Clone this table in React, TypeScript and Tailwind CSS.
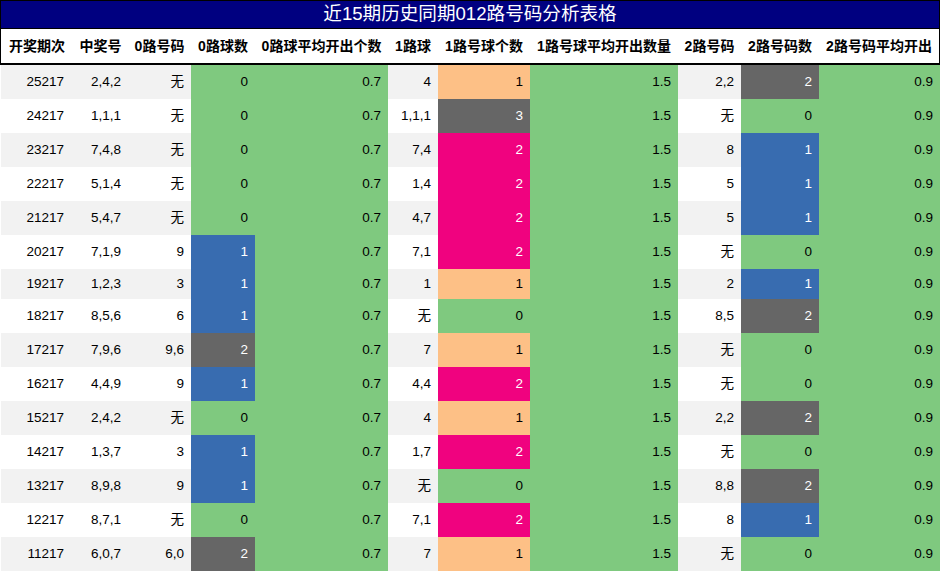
import React from "react";

type Row = [string, string, string, number, string, number, string, number];

const rows: Row[] = [
  ["25217", "2,4,2", "无", 0, "4", 1, "2,2", 2],
  ["24217", "1,1,1", "无", 0, "1,1,1", 3, "无", 0],
  ["23217", "7,4,8", "无", 0, "7,4", 2, "8", 1],
  ["22217", "5,1,4", "无", 0, "1,4", 2, "5", 1],
  ["21217", "5,4,7", "无", 0, "4,7", 2, "5", 1],
  ["20217", "7,1,9", "9", 1, "7,1", 2, "无", 0],
  ["19217", "1,2,3", "3", 1, "1", 1, "2", 1],
  ["18217", "8,5,6", "6", 1, "无", 0, "8,5", 2],
  ["17217", "7,9,6", "9,6", 2, "7", 1, "无", 0],
  ["16217", "4,4,9", "9", 1, "4,4", 2, "无", 0],
  ["15217", "2,4,2", "无", 0, "4", 1, "2,2", 2],
  ["14217", "1,3,7", "3", 1, "1,7", 2, "无", 0],
  ["13217", "8,9,8", "9", 1, "无", 0, "8,8", 2],
  ["12217", "8,7,1", "无", 0, "7,1", 2, "8", 1],
  ["11217", "6,0,7", "6,0", 2, "7", 1, "无", 0],
];

const widths = [
  "w-[72px]",
  "w-[55px]",
  "w-[63px]",
  "w-[64px]",
  "w-[133px]",
  "w-[50px]",
  "w-[92px]",
  "w-[148px]",
  "w-[63px]",
  "w-[78px]",
  "flex-1",
];

const headers = [
  "开奖期次",
  "中奖号",
  "0路号码",
  "0路球数",
  "0路球平均开出个数",
  "1路球",
  "1路号球个数",
  "1路号球平均开出数量",
  "2路号码",
  "2路号码数",
  "2路号码平均开出",
];

const green = "bg-[#7fc97f] text-black";
const blue = "bg-[#386cb0] text-white";
const gray = "bg-[#666666] text-white";
const orange = "bg-[#fdc086] text-black";
const pink = "bg-[#f0027f] text-white";

function zeroTwo(v: number) {
  if (v === 0) return green;
  if (v === 1) return blue;
  return gray;
}
function oneCls(v: number) {
  if (v === 0) return green;
  if (v === 1) return orange;
  if (v === 2) return pink;
  return gray;
}

export default function App() {
  return (
    <div
      className="w-[940px] h-[572px] overflow-hidden bg-white"
      style={{ fontFamily: '"Liberation Sans", "Noto Sans CJK SC", sans-serif' }}
    >
      <div className="border border-black border-b-0">
        <div className="h-[28px] bg-[#000080] text-white text-[18.6px] flex items-center justify-center border-b border-black leading-none">
          近15期历史同期012路号码分析表格
        </div>
        <div className="h-[36px] flex items-center border-b-2 border-black bg-white">
          {headers.map((h, i) => (
            <div
              key={i}
              className={`${widths[i]} text-center text-[14px] font-bold text-black whitespace-nowrap`}
            >
              {h}
            </div>
          ))}
        </div>
      </div>
      <div className="pl-px">
        {rows.map((r, idx) => {
          const bg = idx % 2 === 0 ? "bg-[#f2f2f2]" : "bg-white";
          const h = idx === 6 ? "h-[30px]" : "h-[34px]";
          const cells: [string, string][] = [
            [r[0], bg + " text-black"],
            [r[1], bg + " text-black"],
            [r[2], bg + " text-black"],
            [String(r[3]), zeroTwo(r[3])],
            ["0.7", green],
            [r[4], bg + " text-black"],
            [String(r[5]), oneCls(r[5])],
            ["1.5", green],
            [r[6], bg + " text-black"],
            [String(r[7]), zeroTwo(r[7])],
            ["0.9", green],
          ];
          return (
            <div key={idx} className={`flex ${h}`}>
              {cells.map(([t, c], i) => (
                <div
                  key={i}
                  className={`${widths[i]} ${c} flex items-center justify-end ${
                    i === 0 ? "pr-[9px]" : "pr-[7px]"
                  } text-[13.5px] whitespace-nowrap`}
                >
                  {t}
                </div>
              ))}
            </div>
          );
        })}
      </div>
    </div>
  );
}
